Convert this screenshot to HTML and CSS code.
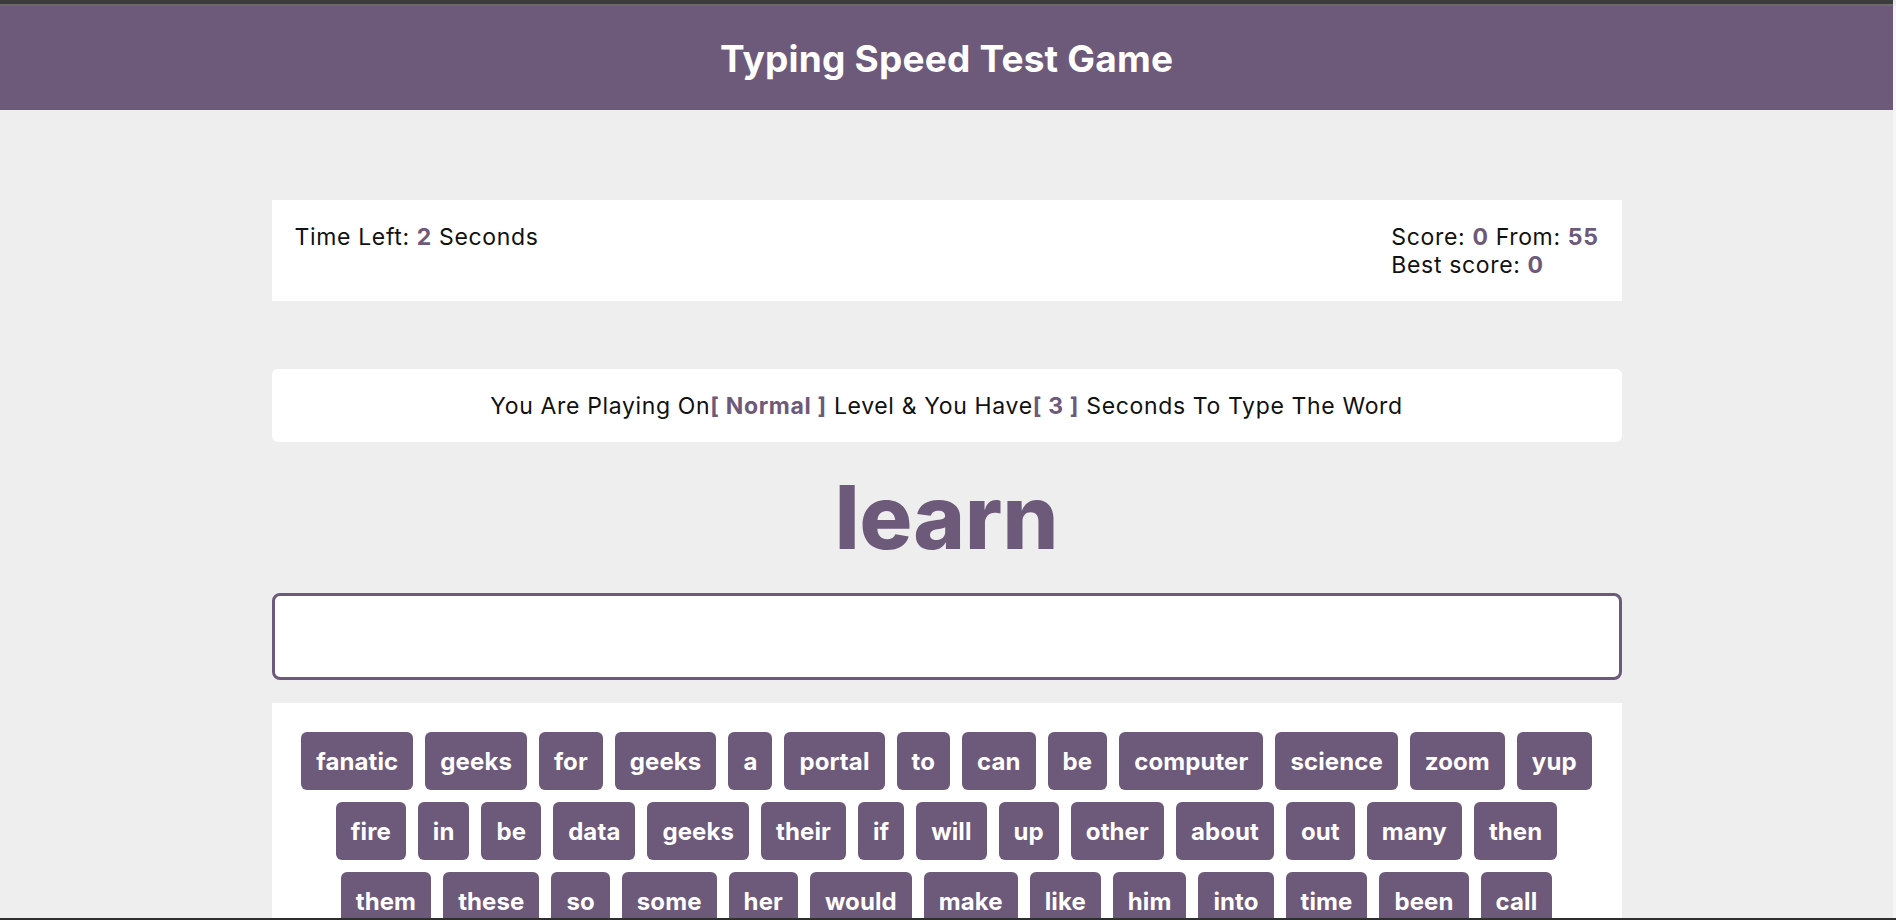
FILE: index.html
```html
<!DOCTYPE html>
<html lang="en">
<head>
<meta charset="utf-8">
<title>Typing Speed Test Game</title>
<link rel="stylesheet" href="styles.css">
</head>
<body>
<div class="frame-top"></div>
<header class="header">
  <h1 class="title">Typing Speed Test Game</h1>
</header>
<main class="game">
  <section class="stats">
    <div class="time">Time Left: <span class="hl">2</span> Seconds</div>
    <div class="score">
      <div>Score: <span class="hl">0</span> From: <span class="hl">55</span></div>
      <div>Best score: <span class="hl">0</span></div>
    </div>
  </section>
  <div class="message">You Are Playing On<span class="hl">[ Normal ]</span> Level &amp; You Have<span class="hl">[ 3 ]</span> Seconds To Type The Word</div>
  <div class="the-word">learn</div>
  <input class="input" type="text" aria-label="Type the word">
  <section class="words">
    <div class="row">
      <span class="chip">fanatic</span><span class="chip">geeks</span><span class="chip">for</span><span class="chip">geeks</span><span class="chip">a</span><span class="chip">portal</span><span class="chip">to</span><span class="chip">can</span><span class="chip">be</span><span class="chip">computer</span><span class="chip">science</span><span class="chip">zoom</span><span class="chip">yup</span>
    </div>
    <div class="row">
      <span class="chip">fire</span><span class="chip">in</span><span class="chip">be</span><span class="chip">data</span><span class="chip">geeks</span><span class="chip">their</span><span class="chip">if</span><span class="chip">will</span><span class="chip">up</span><span class="chip">other</span><span class="chip">about</span><span class="chip">out</span><span class="chip">many</span><span class="chip">then</span>
    </div>
    <div class="row">
      <span class="chip">them</span><span class="chip">these</span><span class="chip">so</span><span class="chip">some</span><span class="chip">her</span><span class="chip">would</span><span class="chip">make</span><span class="chip">like</span><span class="chip">him</span><span class="chip">into</span><span class="chip">time</span><span class="chip">been</span><span class="chip">call</span>
    </div>
    <div class="row">
      <span class="chip">who</span><span class="chip">now</span><span class="chip">look</span><span class="chip">only</span><span class="chip">come</span><span class="chip">its</span><span class="chip">over</span><span class="chip">think</span><span class="chip">also</span><span class="chip">back</span><span class="chip">after</span><span class="chip">use</span>
    </div>
  </section>
</main>
<div class="frame-right"></div>
<div class="frame-bottom"></div>
</body>
</html>
```

FILE: styles.css
```css
* { box-sizing: border-box; }

html, body {
  margin: 0;
  padding: 0;
}

body {
  background: #eeeeee;
  font-family: Inter, "Open Sans", "Liberation Sans", sans-serif;
  color: #111111;
  font-size: 23px;
  line-height: 28px;
  letter-spacing: 0.65px;
  padding-right: 3px;
}

.frame-top {
  height: 6px;
  background: #3c3c3c;
  border-bottom: 2px solid #6a6a6a;
}

.header {
  background: #6d597a;
  height: 104px;
  display: flex;
  align-items: center;
  justify-content: center;
}

.title {
  margin: 0;
  color: #ffffff;
  font-size: 37px;
  font-weight: 700;
  line-height: 44px;
  letter-spacing: 0.2px;
  padding-top: 1px;
}

.game {
  width: 1350px;
  margin: 90px auto 0;
  display: flex;
  flex-direction: column;
}

.hl {
  color: #6d597a;
  font-weight: 700;
}

.stats {
  background: #ffffff;
  padding: 22.5px 23px;
  display: flex;
  justify-content: space-between;
  align-items: flex-start;
}

.message {
  margin-top: 68px;
  background: #ffffff;
  border-radius: 6px;
  padding: 22.5px 23px;
  text-align: center;
}

.the-word {
  margin-top: 31px;
  text-align: center;
  color: #6d597a;
  font-size: 88px;
  line-height: 88px;
  font-weight: 800;
  letter-spacing: 0;
}

.input {
  margin-top: 32px;
  height: 87px;
  width: 100%;
  border: 3px solid #6d597a;
  border-radius: 8px;
  background: #ffffff;
  font-family: inherit;
  font-size: 30px;
  padding: 0 20px;
  outline: none;
}

.words {
  margin-top: 23px;
  background: #ffffff;
  padding: 29px 23px;
  display: flex;
  flex-direction: column;
  gap: 12px;
}

.row {
  display: flex;
  justify-content: center;
  gap: 12px;
}

.chip {
  background: #6d597a;
  color: #ffffff;
  font-weight: 700;
  font-size: 24px;
  line-height: 27px;
  letter-spacing: 0.1px;
  padding: 15.5px 15px;
  border-radius: 6px;
}

.frame-right {
  position: fixed;
  top: 6px;
  right: 0;
  bottom: 0;
  width: 3px;
  background: #f6f6f6;
}

.frame-bottom {
  position: fixed;
  left: 0;
  right: 0;
  bottom: 0;
  height: 2px;
  background: #2e2e2e;
}
```
